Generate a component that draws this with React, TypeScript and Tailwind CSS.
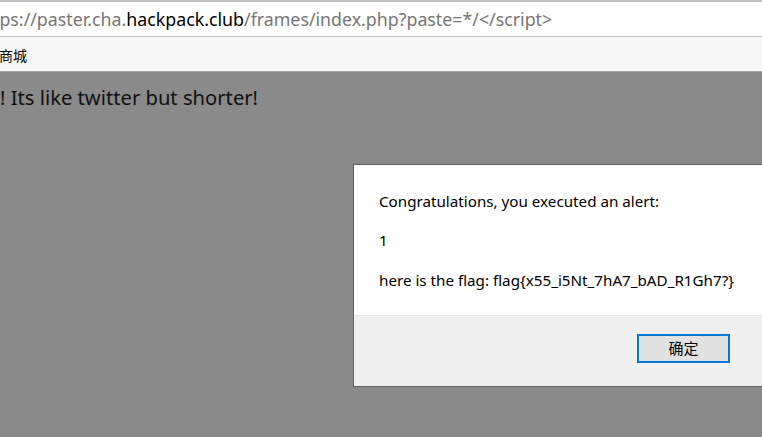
export default function App() {
  const ui = { fontFamily: '"Noto Sans", "Noto Sans CJK SC", sans-serif' };
  return (
    <div className="relative h-[437px] w-[762px] overflow-hidden bg-[#8a8a8a]" style={ui}>
      {/* address bar */}
      <div className="h-[37px] border-t-2 border-b border-[#c4c4c4] bg-white">
        <div className="ml-[-7px] whitespace-nowrap pt-[3px] text-[17.8px] leading-[28px] text-[#767676]">
          tps://paster.cha.<span className="text-black">hackpack.club</span>/frames/index.php?paste=*/&lt;/script&gt;
        </div>
      </div>
      {/* bookmarks bar */}
      <div className="flex h-[35px] items-center border-b border-[#a9a9a9] bg-[#f7f7f7] pt-[3px] text-[14px] text-black">
        <span className="ml-[-1px]">商城</span>
      </div>
      {/* page */}
      <div className="pt-[11px] text-[20.2px] leading-[28px] text-[#111111]">
        ! Its like twitter but shorter!
      </div>

      {/* alert dialog */}
      <div className="absolute left-[353px] top-[164px] flex h-[223px] w-[420px] flex-col border border-[#5f5f5f] bg-white text-[15.2px] text-black">
        <div className="flex h-[150px] flex-col px-[25px] pt-[25px] leading-[22px]">
          <p>Congratulations, you executed an alert:</p>
          <p className="mt-[17px]">1</p>
          <p className="mt-[18px]">here is the flag: flag{'{'}x55_i5Nt_7hA7_bAD_R1Gh7?{'}'}</p>
        </div>
        <div className="flex flex-1 items-start border-t border-[#e4e4e4] bg-[#f0f0f0] pl-[283px] pt-[18px]">
          <button className="h-[29px] w-[93px] border-2 border-[#0078d7] bg-[#e1e1e1] text-[15px] leading-none text-black">
            确定
          </button>
        </div>
      </div>
    </div>
  );
}
